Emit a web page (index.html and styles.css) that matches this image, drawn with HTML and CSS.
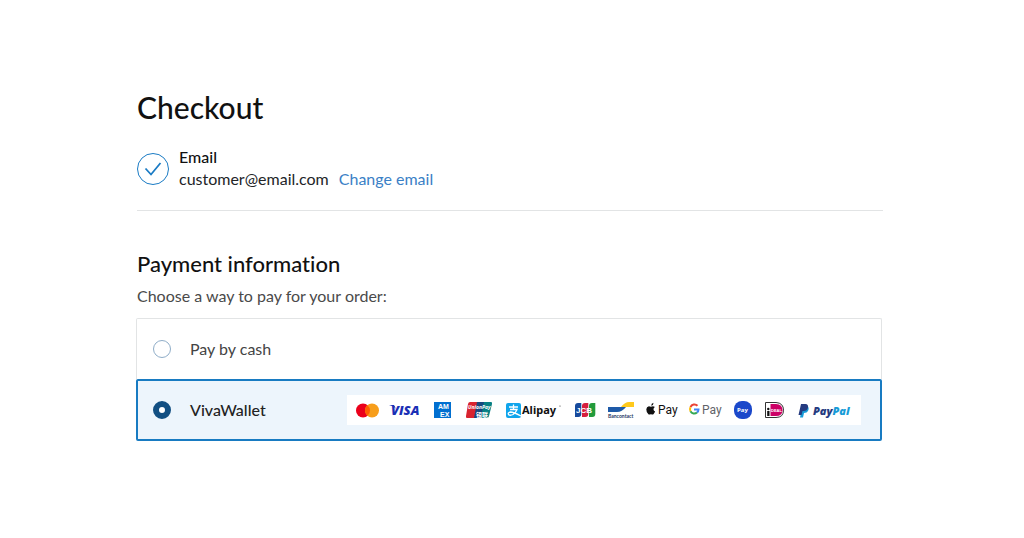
FILE: index.html
```html
<!DOCTYPE html>
<html lang="en">
<head>
    <meta charset="UTF-8">
    <meta name="viewport" content="width=device-width, initial-scale=1.0">
    <title>Checkout</title>
    <link rel="stylesheet" href="styles.css">
</head>
<body>

<main class="checkout">
    <h1>Checkout</h1>

    <section class="customer">
        <svg class="check-icon" width="32" height="32" viewBox="0 0 32 32" fill="none" stroke="#1a7bc4">
            <circle cx="16" cy="16" r="15.5"/>
            <path d="M8.500 15.500l5.500 6L23.500 10" stroke-width="1.800"/>
        </svg>
        <div class="customer-text">
            <h2>Email</h2>
            <p><span>customer@email.com</span><a href="#">Change email</a></p>
        </div>
    </section>

    <section class="payment">
        <h2>Payment information</h2>
        <p>Choose a way to pay for your order:</p>

        <form class="options">
            <label class="option" for="cash">
                <input type="radio" id="cash" name="payment" value="cash">
                <span>Pay by cash</span>
            </label>
            <label class="option selected" for="vivawallet">
                <input type="radio" id="vivawallet" name="payment" value="vivawallet" checked>
                <span>VivaWallet</span>
                <span class="logos">
                    <!-- Mastercard -->
                    <svg width="22" height="30" viewBox="0 0 22 30">
                        <circle cx="7" cy="15.500" r="7" fill="#eb001b"/>
                        <circle cx="16" cy="15.500" r="7" fill="#f79e1b"/>
                        <path d="M11.500 10.140a7 7 0 0 1 0 10.720a7 7 0 0 1 0-10.720z" fill="#ff5f00"/>
                    </svg>
                    <!-- Visa -->
                    <svg width="32" height="30" viewBox="0 0 32 30">
                        <path d="M-1 10h5l2 4q-2-3-7-4z" fill="#1a2fb5"/>
                        <text x="1" y="20" class="visa">VISA</text>
                    </svg>
                    <!-- American Express -->
                    <svg width="17" height="30" viewBox="0 0 17 30">
                        <path d="M0 7h17v16H0z" fill="#016fd0"/>
                        <text x="4" y="14" class="amex">AM</text>
                        <text x="6" y="22" class="amex">EX</text>
                    </svg>
                    <!-- UnionPay -->
                    <svg width="31" height="30" viewBox="0 0 31 30">
                        <path d="M7 7h9l-3 16H4q-1.500 0-1-2L5 9q.5-2 2-2z" fill="#d8232f"/>
                        <path d="M14 7h8l-3 16h-8z" fill="#17477d"/>
                        <path d="M21 7h7q1.500 0 1 2l-3 12q-.5 2-2 2h-6z" fill="#078084"/>
                        <text x="5" y="14" class="union">UnionPay</text>
                        <text x="13" y="22" class="union-cjk">银联</text>
                    </svg>
                    <!-- Alipay -->
                    <svg width="57" height="30" viewBox="0 0 57 30">
                        <rect y="8" width="15" height="15" rx="2" fill="#10a5ec"/>
                        <path d="M3 12h9M7.500 9.500V15M4 14.500h7q-1 3-4 5-3 1.500-4.500 0-1-2 2-2.500 3 0 10.500 4" fill="none" stroke="#fff" stroke-width="1.300"/>
                        <text x="16" y="19" class="alipay">Alipay</text>
                        <circle cx="54" cy="11" r=".6" fill="#333"/>
                    </svg>
                    <!-- JCB -->
                    <svg width="21" height="30" viewBox="0 0 21 30">
                        <path d="M3 8h3.300v11q0 3-3 3H0V11q0-3 3-3z" fill="#174a9c"/>
                        <path d="M10 8h3.300v11q0 3-3 3H7V11q0-3 3-3z" fill="#d61e3d"/>
                        <path d="M17 8h3.300v11q0 3-3 3H14V11q0-3 3-3z" fill="#229b3b"/>
                        <text x="1" y="18" class="jcb">JCB</text>
                    </svg>
                    <!-- Bancontact -->
                    <svg width="26" height="30" viewBox="0 0 26 30">
                        <path d="M0 12h18q-4 5-9 5H0z" fill="#1e5aa8"/>
                        <path d="M26 7v5H13q4-5 8-5z" fill="#ffc91c"/>
                        <text x="0" y="23" class="bancontact">Bancontact</text>
                    </svg>
                    <!-- Apple Pay -->
                    <svg width="31" height="30" viewBox="0 0 31 30">
                        <path d="M5.200 10.800q0-2.500 2.300-3.100.2 2.500-2.300 3.100zM8.800 11.900q-1.500 1-1.300 2.500.2 1.500 1.600 2.100-.5 1.400-1.500 2.500-.7.800-1.500.5-1.200-.5-2.300 0-.9.300-1.600-.5Q.2 16.800.3 14.300q.3-2.700 2.600-3 1 0 2 .5 1-.5 2-.5 1.200.1 1.900.600z" fill="#111"/>
                        <text x="12" y="19" class="pay apple">Pay</text>
                    </svg>
                    <!-- Google Pay -->
                    <svg width="33" height="30" viewBox="0 0 33 30">
                        <g fill="none" stroke-width="2">
                            <path d="M8.500 10.800A4.200 4.200 0 0 0 1.500 12.200" stroke="#ea4335"/>
                            <path d="M1.500 12.200a4.200 4.200 0 0 0 0 4" stroke="#fbbc04"/>
                            <path d="M1.500 16.200a4.200 4.200 0 0 0 6.500 1.300" stroke="#34a853"/>
                            <path d="M8 17.500q1.500-1.200 1.500-3.100H5" stroke="#4285f4"/>
                        </g>
                        <text x="13" y="19" class="pay google">Pay</text>
                    </svg>
                    <!-- Samsung Pay -->
                    <svg width="19" height="30" viewBox="0 0 19 30">
                        <rect y="6" width="18" height="18" rx="8" fill="#1b48ca"/>
                        <text x="3" y="17" class="samsung">Pay</text>
                    </svg>
                    <!-- iDEAL -->
                    <svg width="20" height="30" viewBox="0 0 20 30">
                        <path d="M.5 7.500H11q7.500.5 7.500 7.700T11 22.500H.5z" fill="#fff" stroke="#333"/>
                        <path d="M5.500 9H11q6.500.5 6.500 6.200T11 21H5.500z" fill="#cc0066"/>
                        <circle cx="3.300" cy="14" r="1.200" fill="#111"/>
                        <path d="M2.200 16h2.300v5H2.200z" fill="#111"/>
                        <text x="6" y="17" class="ideal">DEAL</text>
                    </svg>
                    <!-- PayPal -->
                    <svg width="55" height="30" viewBox="0 0 55 30">
                        <path d="M5.500 11h5q2 2 .5 5-1 2-4 2l-1 4.500H3z" fill="#179bd7"/>
                        <path d="M4 9h4.500q3 .3 2.500 3.500Q10.300 16 6.500 16h-1l-1 4H1.500z" fill="#253b80"/>
                        <text x="16" y="20" class="paypal">Pay<tspan fill="#179bd7">Pal</tspan></text>
                    </svg>
                </span>
            </label>
        </form>
    </section>
</main>

</body>
</html>
```
FILE: styles.css
```css
body {
    margin: 0;
    background-color: #fff;
    font-family: Lato, sans-serif;
    font-size: 16px;
    line-height: 22px;
    font-variant-ligatures: none;
    color: #222427;
}

h1, h2, p {
    margin: 0;
}

h1, h2 {
    color: #111;
    font-weight: 500;
}

.checkout {
    padding: 89px 141px 48px 137px;
}

h1 {
    font-size: 30px;
    line-height: 36px;
}

.customer {
    display: flex;
    align-items: center;
    gap: 10px;
    margin-top: 21px;
    padding-bottom: 18px;
    border-bottom: 1px solid #e2e4e5;
}

.customer-text {
    padding-bottom: 2px;
}

.customer h2 {
    font-size: 16px;
    line-height: 22px;
}

.customer p {
    display: flex;
    flex-wrap: wrap;
    gap: 10px;
}

a {
    color: #3a80c6;
    text-decoration: none;
}

.payment {
    margin-top: 39px;
}

.payment h2 {
    font-size: 22px;
    line-height: 28px;
}

.payment p {
    margin-top: 7px;
    color: #4a4a4a;
}

.options {
    margin: 11px 1px 0 -1px;
}

.option {
    display: flex;
    align-items: center;
    height: 60px;
    padding: 0 20px 0 16px;
    border: 1px solid #e2e4e5;
    border-bottom: none;
    border-radius: 2px 2px 0 0;
    color: #444;
}

.option.selected {
    height: 58px;
    padding: 0 19px 0 15px;
    border: 2px solid #187bc2;
    border-radius: 2px;
    background-color: #edf5fc;
    color: #222;
    font-weight: 500;
}

.option input {
    appearance: none;
    box-sizing: border-box;
    flex: none;
    width: 18px;
    height: 18px;
    margin: 0 19px 0 0;
    border: 1px solid #8fadc8;
    border-radius: 50%;
    background-color: #fff;
}

.option input:checked {
    border: 6px solid #124f82;
}

.logos {
    display: flex;
    gap: 12px;
    margin-left: auto;
    padding: 0 9px;
    background-color: #fff;
}

.logos svg {
    flex: none;
    overflow: visible;
}

.visa {
    font: italic 800 13px "Open Sans", sans-serif;
    fill: #1a2fb5;
}

.amex {
    font: bold 7px "Liberation Sans", sans-serif;
    fill: #fff;
}

.union {
    font: italic bold 5px "Open Sans", sans-serif;
    fill: #fff;
}

.union-cjk {
    font: bold 6px "Noto Sans CJK SC", sans-serif;
    fill: #fff;
}

.alipay {
    font: bold 11px "Noto Sans", sans-serif;
    fill: #111;
}

.jcb {
    font: bold 8px "Liberation Sans", sans-serif;
    fill: #fff;
}

.bancontact {
    font: bold 5px Lato, sans-serif;
    fill: #1e3764;
}

.pay {
    font: 400 12px Roboto, sans-serif;
}

.apple {
    fill: #111;
}

.google {
    fill: #5f6368;
}

.samsung {
    font: bold 6px "Open Sans", sans-serif;
    fill: #fff;
}

.ideal {
    font: bold 4px "Liberation Sans", sans-serif;
    fill: #fff;
}

.paypal {
    font: italic 800 11px "Open Sans", sans-serif;
    fill: #253b80;
}
```
